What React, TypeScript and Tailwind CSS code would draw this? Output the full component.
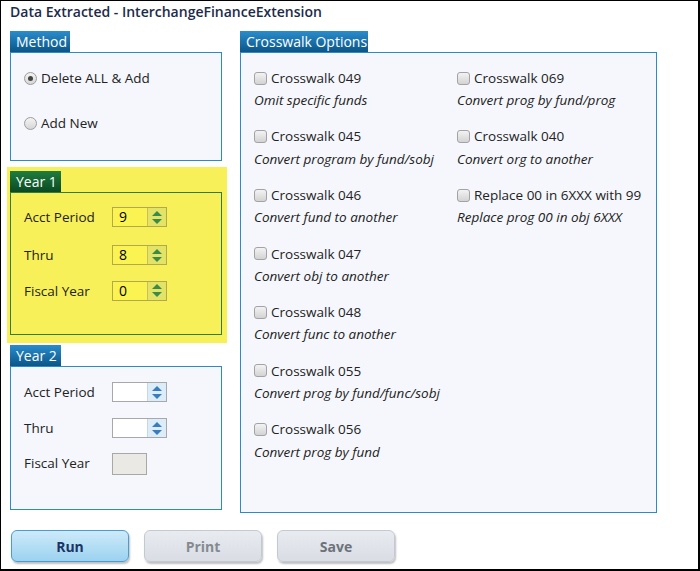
const font = { fontFamily: '"Open Sans", "Noto Sans", sans-serif' };

function Tab({ label, w, green }: { label: string; w: string; green?: boolean }) {
  return (
    <div
      className={`${w} h-[21px] pl-[6px] text-[14px] leading-[21px] text-white ${
        green ? "bg-linear-to-b from-[#1f7d3f] to-[#0a4a22]" : "bg-linear-to-b from-[#2a8dcc] to-[#0a5689]"
      }`}
    >
      {label}
    </div>
  );
}

function Radio({ checked }: { checked?: boolean }) {
  return (
    <span className="flex h-[13px] w-[13px] items-center justify-center rounded-full border border-[#9c9c9c] bg-linear-to-b from-[#f4f4f4] to-[#d6d6d6]">
      {checked && <span className="h-[5px] w-[5px] rounded-full bg-[#444]" />}
    </span>
  );
}

function Check() {
  return (
    <span className="inline-block h-[13px] w-[13px] shrink-0 rounded-[3px] border border-[#a3a3a3] bg-linear-to-b from-[#f3f3f3] to-[#d3d3d3]" />
  );
}

function Spin({ value, hi }: { value?: string; hi?: boolean }) {
  return (
    <div
      className={`flex h-[20px] w-[55px] border ${hi ? "border-[#b2a948] bg-[#fbf352]" : "border-[#a8a8a8] bg-white"}`}
    >
      <div className="flex-1 pl-[6px] text-[14px] leading-[18px] text-black">{value}</div>
      <div
        className={`flex w-[19px] flex-col items-center justify-center gap-[3px] border-l ${
          hi ? "border-[#c8c05a] bg-[#e2e367]" : "border-[#c6d8e6] bg-[#dcedf9]"
        }`}
      >
        <span
          className={`h-0 w-0 border-x-[5px] border-b-[5px] border-x-transparent ${
            hi ? "border-b-[#3c8a48]" : "border-b-[#3a7dbd]"
          }`}
        />
        <span
          className={`h-0 w-0 border-x-[5px] border-t-[5px] border-x-transparent ${
            hi ? "border-t-[#3c8a48]" : "border-t-[#3a7dbd]"
          }`}
        />
      </div>
    </div>
  );
}

const left = [
  ["Crosswalk 049", "Omit specific funds"],
  ["Crosswalk 045", "Convert program by fund/sobj"],
  ["Crosswalk 046", "Convert fund to another"],
  ["Crosswalk 047", "Convert obj to another"],
  ["Crosswalk 048", "Convert func to another"],
  ["Crosswalk 055", "Convert prog by fund/func/sobj"],
  ["Crosswalk 056", "Convert prog by fund"],
];

const right = [
  ["Crosswalk 069", "Convert prog by fund/prog"],
  ["Crosswalk 040", "Convert org to another"],
  ["Replace 00 in 6XXX with 99", "Replace prog 00 in obj 6XXX"],
];

function Option({ title, desc }: { title: string; desc: string }) {
  return (
    <div>
      <div className="flex h-[22px] items-center gap-[4px] text-[13.5px] text-[#222]">
        <Check />
        <span>{title}</span>
      </div>
      <div className="h-[22px] text-[13.5px] leading-[22px] text-[#222] italic">{desc}</div>
    </div>
  );
}

export default function App() {
  return (
    <div
      style={font}
      className="h-[571px] w-[700px] border-t border-l border-r-2 border-b-2 border-black bg-white pl-[9px]"
    >
      <div className="h-[22px] pt-[1px] text-[14px] leading-[20px] font-semibold text-[#1c2b4c]">
        Data Extracted - InterchangeFinanceExtension
      </div>
      <div className="mt-[8px] flex gap-[18px]">
        {/* left column */}
        <div className="w-[212px]">
          <Tab label="Method" w="w-[60px]" />
          <div className="h-[109px] border border-[#2a8bc6] bg-[#f5f7fc] pt-[18px] pl-[13px] text-[13.5px] text-[#222]">
            <div className="flex h-[14px] items-center gap-[4px]">
              <Radio checked />
              <span>Delete ALL &amp; Add</span>
            </div>
            <div className="mt-[31px] flex h-[14px] items-center gap-[4px]">
              <Radio />
              <span>Add New</span>
            </div>
          </div>

          <div className="mt-[6px] -ml-[3px] w-[220px] bg-[#f8f058] pt-[4px] pr-[5px] pb-[8px] pl-[3px]">
            <Tab label="Year 1" w="w-[51px]" green />
            <div className="h-[143px] border border-[#2f7d45] pt-[14px] pl-[13px] text-[13.5px] text-[#222]">
              <div className="flex items-center">
                <span className="w-[88px]">Acct Period</span>
                <Spin value="9" hi />
              </div>
              <div className="mt-[18px] flex items-center">
                <span className="w-[88px]">Thru</span>
                <Spin value="8" hi />
              </div>
              <div className="mt-[15px] flex items-center">
                <span className="w-[88px]">Fiscal Year</span>
                <Spin value="0" hi />
              </div>
            </div>
          </div>

          <div className="mt-[2px]">
            <Tab label="Year 2" w="w-[51px]" />
            <div className="h-[144px] border border-[#2a8bc6] bg-[#f5f7fc] pt-[15px] pl-[13px] text-[13.5px] text-[#222]">
              <div className="flex items-center">
                <span className="w-[88px]">Acct Period</span>
                <Spin />
              </div>
              <div className="mt-[16px] flex items-center">
                <span className="w-[88px]">Thru</span>
                <Spin />
              </div>
              <div className="mt-[14px] flex items-center">
                <span className="w-[88px]">Fiscal Year</span>
                <div className="h-[22px] w-[35px] border border-[#a8a8a8] bg-[#ebe9e4]" />
              </div>
            </div>
          </div>
        </div>

        {/* right column */}
        <div className="w-[417px]">
          <Tab label="Crosswalk Options" w="w-[128px]" />
          <div className="h-[461px] border border-[#2a8bc6] bg-[#f5f7fc] pt-[14px] pl-[13px]">
            <div className="grid grid-cols-[203px_203px]">
              <div className="flex flex-col gap-[14.6px]">
                {left.map(([t, d]) => (
                  <Option key={t} title={t} desc={d} />
                ))}
              </div>
              <div className="flex flex-col gap-[14.6px]">
                {right.map(([t, d]) => (
                  <Option key={t} title={t} desc={d} />
                ))}
              </div>
            </div>
          </div>
        </div>
      </div>

      <div className="mt-[17px] flex gap-[15px] pl-[1px]">
        <button className="h-[32px] w-[118px] rounded-[6px] border border-[#4a9dd0] bg-linear-to-b from-[#cdeaf9] to-[#9cd2f0] text-[14px] font-bold text-[#1b3566] shadow-[1px_2px_2px_rgba(0,0,0,0.25)]">
          Run
        </button>
        <button className="h-[32px] w-[118px] rounded-[6px] border border-[#c4c9d1] bg-linear-to-b from-[#e8ebf0] to-[#d9dde4] text-[14px] font-bold text-[#858a91] shadow-[1px_2px_2px_rgba(0,0,0,0.25)]">
          Print
        </button>
        <button className="h-[32px] w-[118px] rounded-[6px] border border-[#c4c9d1] bg-linear-to-b from-[#e8ebf0] to-[#d9dde4] text-[14px] font-bold text-[#6d727a] shadow-[1px_2px_2px_rgba(0,0,0,0.25)]">
          Save
        </button>
      </div>
    </div>
  );
}
